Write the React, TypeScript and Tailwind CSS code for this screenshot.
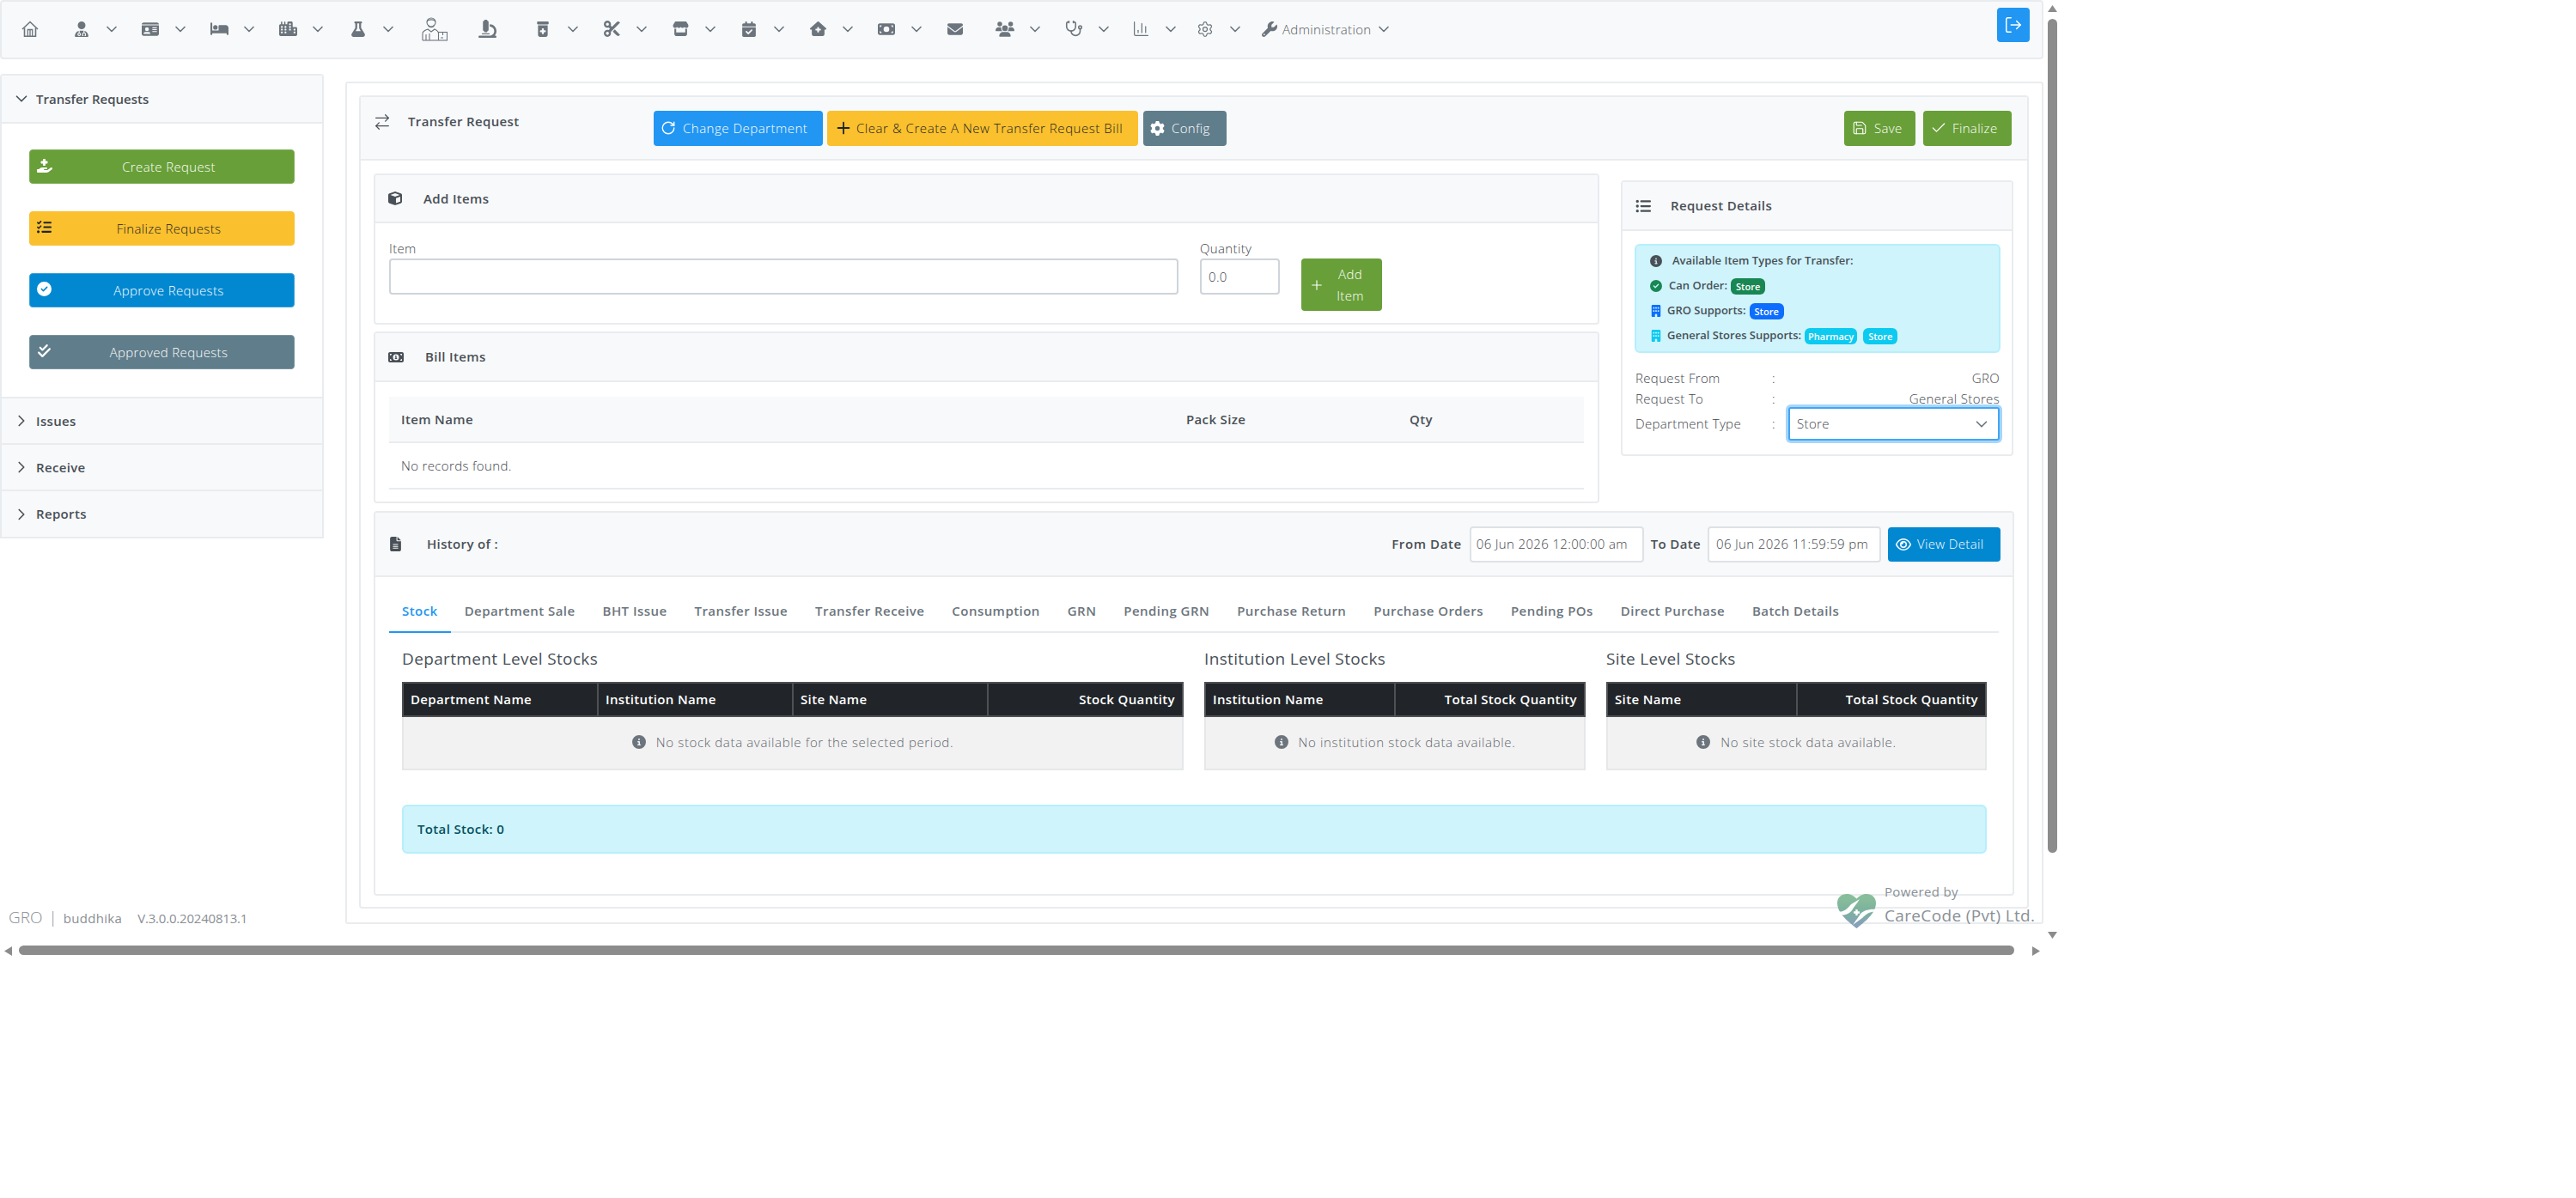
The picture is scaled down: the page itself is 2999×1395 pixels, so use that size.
import React from "react";
import {
  FaBed,
  FaBuilding,
  FaCalendarCheck,
  FaCheckDouble,
  FaCircleCheck,
  FaCircleInfo,
  FaCity,
  FaCube,
  FaEnvelope,
  FaFileLines,
  FaFlask,
  FaGear,
  FaHandHoldingMedical,
  FaHouseMedical,
  FaIdCard,
  FaListCheck,
  FaListUl,
  FaMicroscope,
  FaMoneyBill,
  FaMoneyBill1,
  FaPrescriptionBottleMedical,
  FaRegEye,
  FaScissors,
  FaStore,
  FaUserDoctor,
  FaUsers,
  FaWrench,
} from "react-icons/fa6";
import {
  ArrowRightLeft,
  Check,
  ChartColumn,
  ChevronDown,
  ChevronRight,
  LogOut,
  Plus,
  RotateCw,
  Save,
  Settings,
  Stethoscope,
} from "lucide-react";

const HomeIcon = () => (
  <svg width="20" height="19" viewBox="0 0 20 19" fill="none" stroke="#6c757d" strokeWidth="1.6">
    <path d="M1 10 10 1.5 19 10" />
    <path d="M3.5 8.5v9.7h13V8.5" />
    <path d="M7.3 18v-7.5h5.4V18M10 10.5V18" strokeWidth="1.3" />
  </svg>
);

const PharmacistIcon = () => (
  <svg width="30" height="29" viewBox="0 0 30 29" fill="none" stroke="#6c757d" strokeWidth="1.1">
    <circle cx="11" cy="7" r="5" />
    <path d="M6 6.5c1-3.5 9-3.5 10 0M7.5 10c1 3.5 6 3.5 7 0" />
    <path d="M1 28v-8c0-3 4-4 6-5l4 3 4-3c2 1 4 2 4.5 4" />
    <path d="M5 21v7M9 28v-8" />
    <rect x="19.5" y="18.5" width="10" height="9.5" />
    <path d="M24.5 18.5v3.5M22 25h3" />
    <path d="M1 28h18" />
  </svg>
);

const CareCodeLogo = () => (
  <svg width="47" height="42" viewBox="0 0 47 42">
    <defs>
      <linearGradient id="careHeart" x1="0" y1="0" x2="0" y2="1">
        <stop offset="0" stopColor="#7dba8f" />
        <stop offset="0.55" stopColor="#6fa896" />
        <stop offset="1" stopColor="#7c93bd" />
      </linearGradient>
    </defs>
    <path
      d="M23.5 41C15 34 1 24 1 11.5 1 5 6 1 12 1c5 0 9 2.5 11.5 5.5C26 3.5 30 1 35 1c6 0 11 4 11 10.5C46 24 32 34 23.5 41Z"
      fill="url(#careHeart)"
    />
    <path d="M0 21c7 2 11-1 17-8l10-6c-3 5-6 8-9 13-3 4-9 7-18 5Z" fill="#fff" />
    <path d="M47 22c-7-1-11 1-17 7l-11 8c4-6 6-8 9-13 3-3 9-6 19-5Z" fill="#fff" />
    <path d="M23.5 19v7M20 22.5h7" stroke="#fff" strokeWidth="2.4" />
  </svg>
);

const navItems = [
  { key: "home", box: "w-[60px]", icon: <HomeIcon />, chevron: false },
  { key: "opd", box: "w-[80px]", icon: <FaUserDoctor size={18} />, chevron: true },
  { key: "reception", box: "w-[80px]", icon: <FaIdCard size={20} />, chevron: true },
  { key: "inward", box: "w-[80px]", icon: <FaBed size={21} />, chevron: true },
  { key: "wards", box: "w-[82px]", icon: <FaCity size={21} />, chevron: true },
  { key: "lab", box: "w-[89px]", icon: <FaFlask size={18} />, chevron: true },
  { key: "pharmacist", box: "w-[61px]", icon: <PharmacistIcon />, chevron: false },
  { key: "microscope", box: "w-[65px]", icon: <FaMicroscope size={21} />, chevron: false },
  { key: "pharmacy", box: "w-[80px]", icon: <FaPrescriptionBottleMedical size={18} />, chevron: true },
  { key: "theatre", box: "w-[80px]", icon: <FaScissors size={19} />, chevron: true },
  { key: "store", box: "w-[80px]", icon: <FaStore size={19} />, chevron: true },
  { key: "channel", box: "w-[80px]", icon: <FaCalendarCheck size={18} />, chevron: true },
  { key: "clinic", box: "w-[80px]", icon: <FaHouseMedical size={19} />, chevron: true },
  { key: "cashier", box: "w-[80px]", icon: <FaMoneyBill size={20} />, chevron: true },
  { key: "mail", box: "w-[58px]", icon: <FaEnvelope size={18} />, chevron: false },
  { key: "hr", box: "w-[80px]", icon: <FaUsers size={22} />, chevron: true },
  { key: "emr", box: "w-[78px]", icon: <Stethoscope size={21} strokeWidth={1.8} />, chevron: true },
  { key: "reports", box: "w-[75px]", icon: <ChartColumn size={21} strokeWidth={1.4} />, chevron: true },
  { key: "settings", box: "w-[75px]", icon: <Settings size={20} strokeWidth={1.5} />, chevron: true },
];

const sideButtons = [
  { label: "Create Request", color: "bg-[#689f38] border-[#7fae56] text-white", icon: <FaHandHoldingMedical size={18} /> },
  { label: "Finalize Requests", color: "bg-[#fbc02d] border-[#fbc02d] text-[#212529]", icon: <FaListCheck size={17} /> },
  { label: "Approve Requests", color: "bg-[#0288d1] border-[#3aa0da] text-white", icon: <FaCircleCheck size={17} /> },
  { label: "Approved Requests", color: "bg-[#607d8b] border-[#7a929e] text-white", icon: <FaCheckDouble size={17} /> },
];

const sideRows = [
  { label: "Issues", height: "h-[54px]" },
  { label: "Receive", height: "h-[54px]" },
  { label: "Reports", height: "h-[55px]" },
];

const tabs = [
  "Stock",
  "Department Sale",
  "BHT Issue",
  "Transfer Issue",
  "Transfer Receive",
  "Consumption",
  "GRN",
  "Pending GRN",
  "Purchase Return",
  "Purchase Orders",
  "Pending POs",
  "Direct Purchase",
  "Batch Details",
];

const CardHeader: React.FC<{ className: string; children: React.ReactNode }> = ({ className, children }) => (
  <div className={`flex items-center bg-[#f8f9fa] border-b-2 border-[#e9ecef] text-[#495057] ${className}`}>{children}</div>
);

const StockTable: React.FC<{ title: string; cols: string[]; empty: string }> = ({ title, cols, empty }) => (
  <div>
    <h5 className="h-[27px] text-[19px] leading-[27px] font-normal text-[#495057] whitespace-nowrap mb-[13px]">{title}</h5>
    <table className="w-full table-fixed border-collapse text-[15px]">
      <thead>
        <tr className="h-[39px] bg-[#212529] text-white">
          {cols.map((col, i) => (
            <th
              key={col}
              className={`border-2 border-[#4d5154] px-[8px] font-semibold ${i === cols.length - 1 ? "text-right" : "text-left"}`}
            >
              {col}
            </th>
          ))}
        </tr>
      </thead>
      <tbody>
        <tr className="h-[62px] bg-[#f2f2f2]">
          <td colSpan={cols.length} className="border-2 border-[#e5e7e9] text-center text-[#5f666d] tracking-[0.65px]">
            <span className="inline-flex items-center gap-[12px]">
              <FaCircleInfo size={16} className="text-[#6c757d]" />
              {empty}
            </span>
          </td>
        </tr>
      </tbody>
    </table>
  </div>
);

export default function App() {
  return (
    <div
      className="relative w-[2999px] h-[1395px] overflow-hidden bg-white text-[#3f454b] text-[15px] font-light tracking-[0.35px]"
      style={{ fontFamily: '"Open Sans", "Noto Sans", sans-serif' }}
    >
      <div className="w-[2379px]">
        {/* top menu */}
        <div className="relative flex items-center h-[69px] pl-[13px] pb-[2px] bg-[#f8f9fa] border-2 border-[#e9ecef] rounded-[4px] text-[#6c757d]">
          {navItems.map((item) => (
            <div key={item.key} className={`flex items-center shrink-0 ${item.box}`}>
              <div className="flex justify-center w-[40px]">{item.icon}</div>
              {item.chevron && <ChevronDown size={20} strokeWidth={2} className="ml-[5px]" />}
            </div>
          ))}
          <div className="flex items-center justify-center w-[40px] shrink-0">
            <FaWrench size={18} />
          </div>
          <span className="-ml-[5px] mt-[2px] whitespace-nowrap text-[#555c63]">Administration</span>
          <ChevronDown size={20} strokeWidth={2} className="ml-[4px]" />
          <button className="absolute right-[14px] top-[7px] flex items-center justify-center w-[38px] h-[40px] rounded-[4px] bg-[#2196f3] text-white">
            <LogOut size={22} strokeWidth={1.6} />
          </button>
        </div>

        <div className="flex items-start">
          {/* side menu */}
          <div className="w-[377px] mt-[17px] shrink-0 border-2 border-[#e9ecef] rounded-t-[4px]">
            <CardHeader className="h-[56px] pl-[12px] gap-[6px] font-semibold tracking-normal">
              <ChevronDown size={22} strokeWidth={1.8} />
              <span>Transfer Requests</span>
            </CardHeader>
            <div className="flex flex-col gap-[32px] pt-[30px] pb-[32px] px-[32px]">
              {sideButtons.map((btn) => (
                <button
                  key={btn.label}
                  className={`relative h-[40px] rounded-[4px] border pl-[16px] text-center ${btn.color}`}
                >
                  <span className="absolute left-[8px] top-[9px]">{btn.icon}</span>
                  {btn.label}
                </button>
              ))}
            </div>
            {sideRows.map((row) => (
              <div
                key={row.label}
                className={`flex items-center pl-[12px] gap-[6px] bg-[#f8f9fa] border-t-2 border-[#e9ecef] text-[#495057] font-semibold ${row.height}`}
              >
                <ChevronRight size={22} strokeWidth={1.8} />
                <span>{row.label}</span>
              </div>
            ))}
          </div>

          {/* main area */}
          <div className="w-[1977px] h-[981px] ml-[25px] mt-[26px] p-[14px] border-2 border-[#e9ecef] rounded-[3px]">
            <div className="w-[1944px] h-[947px] border-2 border-[#e9ecef] rounded-[4px]">
              <CardHeader className="h-[74px] pl-[14px] pr-[18px]">
                <ArrowRightLeft size={22} strokeWidth={1.4} className="-mt-[14px]" />
                <span className="ml-[19px] w-[286px] -mt-[16px] font-semibold">Transfer Request</span>
                <div className="flex gap-[5px] text-white">
                  <button className="flex items-center gap-[8px] w-[197px] h-[41px] pl-[8px] rounded-[4px] bg-[#2196f3] whitespace-nowrap tracking-[0.5px]">
                    <RotateCw size={18} strokeWidth={1.8} />
                    Change Department
                  </button>
                  <button className="flex items-center gap-[4px] w-[362px] h-[41px] pl-[8px] rounded-[4px] bg-[#fbc02d] text-[#212529] whitespace-nowrap tracking-[0.55px]">
                    <Plus size={22} strokeWidth={2} />
                    Clear &amp; Create A New Transfer Request Bill
                  </button>
                  <button className="flex items-center gap-[8px] w-[97px] h-[41px] ml-[1px] pl-[8px] rounded-[4px] bg-[#607d8b]">
                    <FaGear size={17} />
                    Config
                  </button>
                </div>
                <div className="flex gap-[9px] ml-auto text-white">
                  <button className="flex items-center gap-[8px] w-[83px] h-[41px] pl-[9px] rounded-[4px] bg-[#689f38]">
                    <Save size={18} strokeWidth={1.5} />
                    Save
                  </button>
                  <button className="flex items-center gap-[6px] w-[103px] h-[41px] pl-[8px] rounded-[4px] bg-[#689f38]">
                    <Check size={20} strokeWidth={1.5} />
                    Finalize
                  </button>
                </div>
              </CardHeader>

              <div className="pt-[15px] px-[15px]">
                <div className="flex items-start gap-[25px]">
                  <div className="flex flex-col gap-[8px] w-[1427px]">
                    {/* add items */}
                    <div className="h-[176px] border-2 border-[#e9ecef] rounded-[4px]">
                      <CardHeader className="h-[56px] pl-[15px]">
                        <FaCube size={16} />
                        <span className="ml-[25px] font-semibold">Add Items</span>
                      </CardHeader>
                      <div className="flex items-start px-[16px] pt-[19px]">
                        <label className="w-[919px] mr-[25px]">
                          <span className="block h-[20px] leading-[20px]">Item</span>
                          <input className="block w-full h-[42px] mt-[2px] bg-white border-2 border-[#ced4da] rounded-[4px]" />
                        </label>
                        <label className="w-[93px] mr-[25px]">
                          <span className="block h-[20px] leading-[20px]">Quantity</span>
                          <input
                            readOnly
                            value="0.0"
                            className="block w-full h-[42px] mt-[2px] px-[8px] bg-white border-2 border-[#ced4da] rounded-[4px]"
                          />
                        </label>
                        <button className="flex items-center w-[94px] h-[61px] mt-[22px] pl-[9px] rounded-[4px] bg-[#689f38] text-white">
                          <Plus size={18} strokeWidth={1.5} />
                          <span className="flex-1 pr-[7px] leading-[25px]">
                            Add
                            <br />
                            Item
                          </span>
                        </button>
                      </div>
                    </div>

                    {/* bill items */}
                    <div className="h-[200px] border-2 border-[#e9ecef] rounded-[4px]">
                      <CardHeader className="h-[57px] pl-[15px]">
                        <FaMoneyBill1 size={18} />
                        <span className="ml-[25px] font-semibold">Bill Items</span>
                      </CardHeader>
                      <div className="px-[16px] pt-[17px]">
                        <div className="flex items-center h-[54px] pl-[14px] bg-[#f8f9fa] border-b-2 border-[#e9ecef] text-[#495057] font-semibold">
                          <span className="w-[914px]">Item Name</span>
                          <span className="w-[260px]">Pack Size</span>
                          <span>Qty</span>
                        </div>
                        <div className="flex items-center h-[54px] pl-[14px] border-b-2 border-[#e9ecef]">No records found.</div>
                      </div>
                    </div>
                  </div>

                  {/* request details */}
                  <div className="w-[457px] h-[321px] mt-[8px] border-2 border-[#e9ecef] rounded-[4px]">
                    <CardHeader className="h-[57px] pl-[15px]">
                      <FaListUl size={18} />
                      <span className="ml-[23px] font-semibold">Request Details</span>
                    </CardHeader>
                    <div className="px-[14px] pt-[15px]">
                      <div className="flex flex-col justify-center gap-[8px] w-[426px] h-[127px] pl-[16px] bg-[#cff4fc] border-2 border-[#b6effb] rounded-[6px] text-[#495057] text-[13px] font-semibold tracking-normal">
                        <div className="flex items-center h-[21px]">
                          <FaCircleInfo size={14} className="mr-[12px]" />
                          Available Item Types for Transfer:
                        </div>
                        <div className="flex items-center h-[21px]">
                          <FaCircleCheck size={14} className="mr-[8px] text-[#198754]" />
                          Can Order:
                          <span className="ml-[4px] px-[6px] leading-[19px] rounded-[6px] bg-[#198754] text-white text-[11px]">Store</span>
                        </div>
                        <div className="flex items-center h-[21px]">
                          <FaBuilding size={14} className="mr-[6px] text-[#0d6efd]" />
                          GRO Supports:
                          <span className="ml-[4px] px-[6px] leading-[19px] rounded-[6px] bg-[#0d6efd] text-white text-[11px]">Store</span>
                        </div>
                        <div className="flex items-center h-[21px]">
                          <FaBuilding size={14} className="mr-[6px] text-[#0dcaf0]" />
                          General Stores Supports:
                          <span className="ml-[4px] px-[4px] leading-[19px] rounded-[6px] bg-[#0dcaf0] text-white text-[11px]">Pharmacy</span>
                          <span className="ml-[7px] px-[6px] leading-[19px] rounded-[6px] bg-[#0dcaf0] text-white text-[11px]">Store</span>
                        </div>
                      </div>
                      <div className="grid grid-cols-[159px_19px_1fr] items-center w-[424px] ml-px mt-[17px] h-[24px]">
                        <span>Request From</span>
                        <span>:</span>
                        <span className="text-right">GRO</span>
                      </div>
                      <div className="grid grid-cols-[159px_19px_1fr] items-center w-[424px] ml-px h-[24px]">
                        <span>Request To</span>
                        <span>:</span>
                        <span className="text-right">General Stores</span>
                      </div>
                      <div className="grid grid-cols-[159px_19px_1fr] items-center w-[424px] ml-px -mt-[2px]">
                        <span>Department Type</span>
                        <span>:</span>
                        <div className="flex items-center justify-between h-[39px] px-[8px] bg-white border-2 border-[#42a5f5] rounded-[3px] ring-[3px] ring-[#a6d5fa]">
                          Store
                          <ChevronDown size={22} strokeWidth={1.8} className="text-[#6c757d]" />
                        </div>
                      </div>
                    </div>
                  </div>
                </div>

                {/* history */}
                <div className="h-[448px] mt-[9px] border-2 border-[#e9ecef] rounded-[4px]">
                  <CardHeader className="h-[75px] pl-[15px] pr-[14px]">
                    <FaFileLines size={17} />
                    <span className="ml-[28px] font-semibold">History of :</span>
                    <span className="ml-auto mr-[9px] font-semibold tracking-[0.6px]">From Date</span>
                    <div className="flex items-center w-[203px] h-[42px] pl-[6px] bg-white border-2 border-[#dee2e6] rounded-[4px] text-[#3f454b] whitespace-nowrap">
                      06 Jun 2026 12:00:00 am
                    </div>
                    <span className="ml-[8px] mr-[8px] font-semibold">To Date</span>
                    <div className="flex items-center w-[202px] h-[42px] pl-[8px] bg-white border-2 border-[#dee2e6] rounded-[4px] text-[#3f454b] whitespace-nowrap">
                      06 Jun 2026 11:59:59 pm
                    </div>
                    <button className="flex items-center gap-[7px] w-[131px] h-[40px] ml-[8px] pl-[9px] rounded-[4px] bg-[#0288d1] text-white whitespace-nowrap">
                      <FaRegEye size={18} />
                      View Detail
                    </button>
                  </CardHeader>
                  <div className="px-[16px] pt-[22px]">
                    <div className="flex h-[43px] border-b-2 border-[#e9ecef] font-semibold text-[#6c757d] tracking-[0.45px]">
                      {tabs.map((tab, i) => (
                        <div
                          key={tab}
                          className={
                            i === 0
                              ? "h-[43px] px-[15px] pt-[6px] whitespace-nowrap border-b-2 border-[#2196f3] text-[#2196f3]"
                              : "h-[43px] px-[16px] pt-[6px] whitespace-nowrap"
                          }
                        >
                          {tab}
                        </div>
                      ))}
                    </div>
                    <div className="px-[15px] pt-[17px]">
                      <div className="grid grid-cols-[910px_444px_443px] gap-[24px]">
                        <StockTable
                          title="Department Level Stocks"
                          cols={["Department Name", "Institution Name", "Site Name", "Stock Quantity"]}
                          empty="No stock data available for the selected period."
                        />
                        <StockTable
                          title="Institution Level Stocks"
                          cols={["Institution Name", "Total Stock Quantity"]}
                          empty="No institution stock data available."
                        />
                        <StockTable
                          title="Site Level Stocks"
                          cols={["Site Name", "Total Stock Quantity"]}
                          empty="No site stock data available."
                        />
                      </div>
                      <div className="flex items-center w-[1845px] h-[57px] mt-[40px] pl-[16px] bg-[#cff4fc] border-2 border-[#b6effb] rounded-[6px] text-[#055160] font-semibold">
                        Total Stock: 0
                      </div>
                    </div>
                  </div>
                </div>
              </div>
            </div>
          </div>
        </div>
      </div>

      {/* fixed footer bits */}
      <div className="absolute left-[10px] top-[1054px] flex items-baseline text-[#8a8f94] whitespace-nowrap tracking-normal">
        <span className="text-[19px]">GRO</span>
        <span className="ml-[7px] text-[19px]">|</span>
        <span className="ml-[7px] text-[15px] font-medium tracking-[0.3px]">buddhika</span>
        <span className="ml-[18px] text-[15px] font-normal tracking-[-0.2px]">V.3.0.0.20240813.1</span>
      </div>
      <div className="absolute left-[2138px] top-[1026px] flex opacity-90">
        <div className="mt-[14px]">
          <CareCodeLogo />
        </div>
        <div className="ml-[9px] text-[#7d858c] font-normal whitespace-nowrap">
          <div className="h-[24px] text-[15px] leading-[24px]">Powered by</div>
          <div className="mt-[2px] text-[19px] leading-[28px]">CareCode (Pvt) Ltd.</div>
        </div>
      </div>

      {/* window scrollbars */}
      <svg className="absolute left-[2384px] top-[6px]" width="11" height="8" viewBox="0 0 11 8">
        <polygon points="5.5,0 11,8 0,8" fill="#8c8c8c" />
      </svg>
      <div className="absolute left-[2384px] top-[22px] w-[11px] h-[971px] rounded-full bg-[#8c8c8c]" />
      <svg className="absolute left-[2384px] top-[1085px]" width="11" height="8" viewBox="0 0 11 8">
        <polygon points="0,0 11,0 5.5,8" fill="#8c8c8c" />
      </svg>
      <svg className="absolute left-[5px] top-[1102px]" width="9" height="11" viewBox="0 0 9 11">
        <polygon points="9,0 9,11 0,5.5" fill="#8c8c8c" />
      </svg>
      <div className="absolute left-[22px] top-[1101px] w-[2323px] h-[11px] rounded-full bg-[#8c8c8c]" />
      <svg className="absolute left-[2366px] top-[1102px]" width="9" height="11" viewBox="0 0 9 11">
        <polygon points="0,0 0,11 9,5.5" fill="#8c8c8c" />
      </svg>
    </div>
  );
}
